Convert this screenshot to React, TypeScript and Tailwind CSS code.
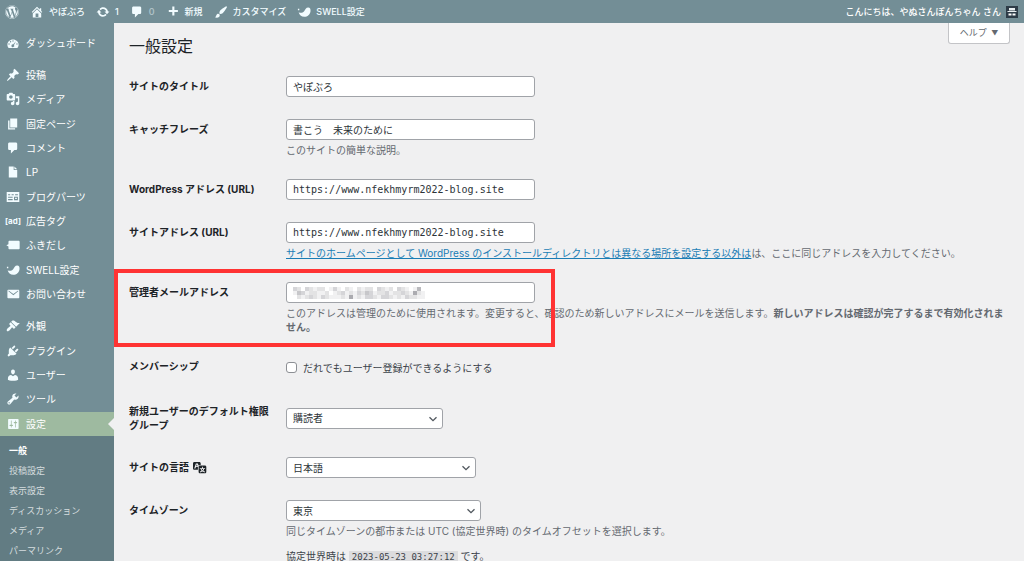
import React from 'react';
import { FaWordpress } from 'react-icons/fa6';

const ICONS = {
    home: 'M16 8.5l1.53 1.53-1.06 1.06L10 4.6l-6.47 6.49-1.06-1.06L10 2.5l4 4v-2h2v4zm-6-2.46l6 5.99V18H4v-5.97L10 6.04zM12 17v-5H8v5h4z',
    update: 'M10.2 3.28c3.53 0 6.43 2.61 6.92 6h2.08l-3.5 4-3.5-4h2.32c-.45-1.97-2.21-3.45-4.32-3.45-1.45 0-2.73.71-3.54 1.78L4.95 5.66C6.23 4.2 8.11 3.28 10.2 3.28zm-.4 13.44c-3.52 0-6.43-2.61-6.92-6H.8l3.5-4c1.17 1.33 2.33 2.67 3.5 4H5.48c.45 1.97 2.21 3.45 4.32 3.45 1.45 0 2.73-.71 3.54-1.78l1.71 1.95c-1.28 1.46-3.15 2.38-5.25 2.38z',
    comment: 'M5 2h9c1.1 0 2 .9 2 2v7c0 1.1-.9 2-2 2h-2l-5 5v-5H5c-1.1 0-2-.9-2-2V4c0-1.1.9-2 2-2z',
    plus: 'M17 7v3h-5v5H9v-5H4V7h5V2h3v5h5z',
    brush: 'M18.33 3.57s.27-.8-.31-1.36c-.53-.52-1.22-.24-1.22-.24-.61.3-5.76 3.47-7.67 5.57-.86.96-2.06 3.79-1.09 4.82.92.98 3.96-.17 4.79-1 2.06-2.06 5.21-7.17 5.5-7.79zM1.4 17.65c2.37-1.56 1.46-3.41 3.23-4.64.93-.65 2.22-.62 3.08.29.63.67.8 2.57-.16 3.46-1.57 1.45-4 1.55-6.15.89z',
    swell: 'M2.4 10.4c2.6 1.4 5.8.9 7.800-1.600C11.900 6.700 12.800 3.600 16 3.600c2.600 0 3.700 2.400 3.300 5.200-.6 4.700-4.200 8-8.800 8-4.300 0-7.400-2.700-8.100-6.400zM1.300 5.400h2v2h-2z',
    dashboard: 'M3.76 17h12.480c1.100-1.240 1.760-2.870 1.760-4.660C18 8.280 14.420 5 10 5s-8 3.280-8 7.340c0 1.790.660 3.420 1.760 4.660zM10 6a1 1 0 1 1 0 2 1 1 0 0 1 0-2zM6.500 7.300a1 1 0 1 1 0 2 1 1 0 0 1 0-2zM4.300 10.500a1 1 0 1 1 0 2 1 1 0 0 1 0-2zM15.700 10.500a1 1 0 1 1 0 2 1 1 0 0 1 0-2zM14.200 7.600l-2.800 5.200a2 2 0 1 1-1.300-.8z',
    post: 'M10.44 3.02l1.82-1.82 6.36 6.35-1.83 1.82c-1.05-.68-2.48-.57-3.41.36l-.75.75c-.92.93-1.04 2.35-.35 3.41l-1.83 1.82-2.41-2.41-2.8 2.79c-.42.42-3.38 2.71-3.8 2.29s1.86-3.39 2.28-3.81l2.79-2.79L4.1 9.36l1.83-1.82c1.05.69 2.48.57 3.4-.36l.75-.75c.93-.92 1.05-2.35.36-3.41z',
    media: 'M13 11V4c0-.55-.45-1-1-1h-1.67L9 1H5L3.67 3H2c-.55 0-1 .45-1 1v7c0 .55.45 1 1 1h10c.55 0 1-.45 1-1zM7 4.5c1.38 0 2.5 1.12 2.5 2.5S8.38 9.5 7 9.5 4.5 8.38 4.5 7 5.62 4.5 7 4.5zM14 6h5v10.5c0 1.38-1.12 2.5-2.5 2.5S14 17.88 14 16.5s1.12-2.5 2.5-2.5c.17 0 .34.02.5.05V9h-3V6zm-4 8.05V13h2v3.5c0 1.38-1.12 2.5-2.5 2.5S7 17.88 7 16.5 8.12 14 9.5 14c.17 0 .34.02.5.05z',
    page: 'M6 15V2h10v13H6zm-1 1h8v2H3V5h2v11z',
    doc: 'M4 2h7v5h5v11H4zM12 2l4 4h-4z',
    parts: 'M1 3h18v14H1zM3 6h3v1.500H3zM8 6h3v1.500H8zM13 6h4v1.500h-4zM3 9.500h6.500v1.500H3zM3 13h6.500v1.500H3zM11.500 9.500H17v5h-5.500zM13 11v2h2.500v-2z',
    balloon: 'M5 4h13c.8 0 1.500.7 1.500 1.500v9c0 .8-.7 1.500-1.500 1.500H5c-.8 0-1.500-.7-1.500-1.500V12L.5 10.500 3.500 9V5.500C3.500 4.700 4.200 4 5 4z',
    mail: 'M3.500 4h14c.8 0 1.500.7 1.500 1.500v9c0 .8-.7 1.500-1.500 1.500h-14c-.8 0-1.500-.7-1.500-1.500v-9C2 4.700 2.700 4 3.500 4zM4.200 5.300c-.6-.3-1.100.4-.6.9l6.900 5.600 6.900-5.600c.5-.5 0-1.200-.6-.9l-6.300 4.800z',
    appearance: 'M14.48 11.06L7.41 3.99l1.5-1.5c.5-.56 2.3-.47 3.51.32 1.21.8 1.43 1.28 2.91 2.1 1.18.64 2.45 1.26 4.45.85zm-.71.71L6.7 4.7 4.93 6.47c-.39.39-.39 1.02 0 1.41l1.06 1.06c.39.39.39 1.03 0 1.42-.6.6-1.43 1.11-2.21 1.69-.35.26-.7.53-1.01.84C1.43 14.23.4 16.08 1.4 17.07c.99 1 2.84-.03 4.18-1.36.31-.31.58-.66.85-1.02.57-.78 1.08-1.61 1.69-2.21.39-.39 1.02-.39 1.41 0l1.06 1.06c.39.39 1.02.39 1.41 0z',
    plugins: 'M13.11 4.36L9.87 7.6 8 5.73l3.24-3.24c.35-.34 1.05-.2 1.56.32.52.51.66 1.21.31 1.55zm-8 1.77l.91-1.12 9.01 9.01-1.19.84c-.71.71-2.63 1.16-3.82 1.16H6.14L4.9 17.26c-.59.59-1.54.59-2.12 0-.59-.58-.59-1.53 0-2.12l1.24-1.24v-3.88c0-1.13.4-3.19 1.09-3.89zm7.26 3.97l3.24-3.24c.34-.35 1.04-.21 1.55.31.52.51.66 1.21.31 1.55l-3.24 3.25z',
    users: 'M10 9.25c-2.27 0-2.73-3.44-2.73-3.44C7 4.02 7.82 2 9.97 2c2.16 0 2.98 2.02 2.71 3.81 0 0-.41 3.44-2.68 3.44zm0 2.57L12.72 10c2.39 0 4.52 2.33 4.52 4.53v2.49s-3.65 1.13-7.24 1.13c-3.65 0-7.24-1.13-7.24-1.13v-2.49c0-2.25 1.94-4.48 4.47-4.48z',
    tools: 'M16.68 9.77c-1.34 1.34-3.3 1.67-4.95.99l-5.41 6.52c-.99.99-2.59.99-3.58 0s-.99-2.59 0-3.57l6.52-5.42c-.68-1.65-.35-3.61.99-4.95 1.28-1.28 3.12-1.62 4.72-1.06l-2.89 2.89 2.82 2.82 2.86-2.87c.53 1.58.18 3.39-1.08 4.65zM3.81 16.21c.4.39 1.04.39 1.43 0 .4-.4.4-1.04 0-1.43-.39-.4-1.03-.4-1.43 0-.39.39-.39 1.03 0 1.43z',
    settings: 'M18 16V4c0-.55-.45-1-1-1H4c-.55 0-1 .45-1 1v12c0 .55.45 1 1 1h13c.55 0 1-.45 1-1zM8 11h1c.55 0 1 .45 1 1s-.45 1-1 1H8v1.5c0 .28-.22.5-.5.5s-.5-.22-.5-.5V13H6c-.55 0-1-.45-1-1s.45-1 1-1h1V5.5c0-.28.22-.5.5-.5s.5.22.5.5V11zm5-2h-1c-.55 0-1-.45-1-1s.45-1 1-1h1V5.5c0-.28.22-.5.5-.5s.5.22.5.5V7h1c.55 0 1 .45 1 1s-.45 1-1 1h-1v5.5c0 .28-.22.5-.5.5s-.5-.22-.5-.5V9z',
    translation: 'M11 7H9.49c-.63 0-1.25.3-1.59.7L7 5H4.13l-2.39 7h1.69l.74-2H7v4H2c-1.1 0-2-.9-2-2V5c0-1.1.9-2 2-2h7c1.1 0 2 .9 2 2v2zM6.51 9H4.49l1-2.93zM10 8h7c1.1 0 2 .9 2 2v7c0 1.1-.9 2-2 2h-7c-1.1 0-2-.9-2-2v-7c0-1.1.9-2 2-2zm7.25 5v-1.08h-3.17V9.75h-1.16v2.17H9.75V13h1.28c.11.85.56 1.85 1.28 2.62-.87.36-1.89.62-2.31.62-.01.02.22.97.2 1.46.84 0 2.21-.5 3.28-1.15 1.09.65 2.48 1.15 3.34 1.15-.02-.49.2-1.44.2-1.46-.43 0-1.49-.27-2.38-.63.7-.77 1.14-1.77 1.25-2.61h1.36zm-3.81 1.93c-.5-.46-.85-1.13-1.01-1.93h2.09c-.17.8-.51 1.47-1.08 1.93z',
};

type IconName = keyof typeof ICONS;

interface MenuItem {
    label: string;
    icon?: IconName;
    active?: boolean;
}

const CONTENT_MENU: MenuItem[] = [
    { label: '投稿', icon: 'post' },
    { label: 'メディア', icon: 'media' },
    { label: '固定ページ', icon: 'page' },
    { label: 'コメント', icon: 'comment' },
    { label: 'LP', icon: 'doc' },
    { label: 'ブログパーツ', icon: 'parts' },
    { label: '広告タグ' },
    { label: 'ふきだし', icon: 'balloon' },
    { label: 'SWELL設定', icon: 'swell' },
    { label: 'お問い合わせ', icon: 'mail' },
];

const ADMIN_MENU: MenuItem[] = [
    { label: '外観', icon: 'appearance' },
    { label: 'プラグイン', icon: 'plugins' },
    { label: 'ユーザー', icon: 'users' },
    { label: 'ツール', icon: 'tools' },
    { label: '設定', icon: 'settings', active: true },
];

const SUBMENU = ['一般', '投稿設定', '表示設定', 'ディスカッション', 'メディア', 'パーマリンク'];

// darkness of each block of the masked address, 0 = white
const MASK = [
    '320321220131021021220321203210150',
    '143122112012312132431223122321621',
    '021232132111216121332133212132211',
];

function Icon({ name, className = 'size-[14px]' }: { name: IconName; className?: string }) {
    return (
        <svg viewBox="0 0 20 20" className={`shrink-0 ${className}`} fill="currentColor" fillRule="evenodd" aria-hidden="true">
            <path d={ICONS[name]} />
        </svg>
    );
}

function BarLink({ icon, label, dim }: { icon: IconName; label: string; dim?: boolean }) {
    return (
        <a href="#" className="flex items-center gap-[5px] text-[#f2fcff]">
            <Icon name={icon} />
            <span className={dim ? 'opacity-50' : ''}>{label}</span>
        </a>
    );
}

function AdminBar() {
    return (
        <header className="flex h-[23px] shrink-0 items-center bg-[#738e96] pl-[5px] pr-[6px] text-[9px] leading-[14px] font-medium text-white">
            <nav className="flex items-center gap-[11px]">
                <a href="#" aria-label="WordPress" className="text-[#f2fcff]">
                    <FaWordpress className="size-[14px]" />
                </a>
                <BarLink icon="home" label="やぽぶろ" />
                <BarLink icon="update" label="1" />
                <BarLink icon="comment" label="0" dim />
                <BarLink icon="plus" label="新規" />
                <BarLink icon="brush" label="カスタマイズ" />
                <BarLink icon="swell" label="SWELL設定" />
            </nav>
            <a href="#" className="ml-auto flex items-center gap-[5px]">
                こんにちは、やぬさんぽんちゃん さん
                <svg viewBox="0 0 12 12" className="size-[12px]" aria-hidden="true">
                    <rect width="12" height="12" fill="#2d3b47" />
                    <path d="M3 2h6v2.500H3zM1.500 5h9v1h-9z" fill="#e8eef0" />
                    <path d="M2.500 7.500h3v2h-3zM6.500 7.500h3v2h-3z" fill="#fff" />
                </svg>
            </a>
        </header>
    );
}

function SideLink({ item }: { item: MenuItem }) {
    return (
        <a
            href="#"
            className={`relative flex items-center gap-[6px] pl-[6px] ${item.active ? 'bg-[#9ebaa0]' : ''}`}
        >
            {item.icon ? (
                <span className="text-[#f2fcff]"><Icon name={item.icon} /></span>
            ) : (
                <span className="flex w-[14px] shrink-0 justify-center text-[8px] font-bold text-[#f2fcff]">[ad]</span>
            )}
            <span className="whitespace-nowrap">{item.label}</span>
            {item.active && (
                <span className="absolute right-0 top-1/2 -translate-y-1/2 border-y-[6px] border-r-[6px] border-y-transparent border-r-[#f0f0f1]" />
            )}
        </a>
    );
}

function Sidebar() {
    return (
        <nav className="w-[114px] shrink-0 bg-[#738e96] pt-[8px] text-[10px] leading-[14px] text-white">
            <div className="grid h-[24px]">
                <SideLink item={{ label: 'ダッシュボード', icon: 'dashboard' }} />
            </div>
            <div className="mt-[8px] grid h-[243px] auto-rows-fr">
                {CONTENT_MENU.map((item) => <SideLink key={item.label} item={item} />)}
            </div>
            <div className="mt-[8px] grid h-[122px] auto-rows-fr">
                {ADMIN_MENU.map((item) => <SideLink key={item.label} item={item} />)}
            </div>
            <ul className="bg-[#627c83] py-[5px] text-[9px]">
                {SUBMENU.map((label, i) => (
                    <li key={label}>
                        <a
                            href="#"
                            className={`block pl-[9px] leading-[20px] ${i === 0 ? 'font-bold text-white' : 'text-[#d5dddf]'}`}
                        >
                            {label}
                        </a>
                    </li>
                ))}
            </ul>
        </nav>
    );
}

interface RowProps {
    label: React.ReactNode;
    htmlFor: string;
    marked?: boolean;
    children: React.ReactNode;
}

function Row({ label, htmlFor, marked, children }: RowProps) {
    return (
        <div className="relative flex">
            <div className="w-[157px] shrink-0 py-[14px] pr-[14px] font-bold text-[#1d2327]">
                <label htmlFor={htmlFor}>{label}</label>
            </div>
            <div className="min-w-0 flex-1 self-center py-[11px]">{children}</div>
            {marked && (
                <div className="pointer-events-none absolute -inset-y-[2px] -left-[15px] w-[441px] border-4 border-[#ff3333]" />
            )}
        </div>
    );
}

function TextBox({ id, value, mono }: { id: string; value: string; mono?: boolean }) {
    return (
        <input
            id={id}
            type="text"
            defaultValue={value}
            className={`block h-[21px] w-[249px] rounded-[3px] border border-[#a0a3a8] bg-white px-[6px] text-[#2c3338] ${mono ? "font-['DejaVu_Sans_Mono',monospace]" : ''}`}
        />
    );
}

function SelectBox({ id, value, width }: { id: string; value: string; width: string }) {
    return (
        <div className={`relative ${width}`}>
            <select
                id={id}
                className="block h-[21px] w-full appearance-none rounded-[3px] border border-[#a0a3a8] bg-white pl-[6px] pr-[18px] text-[#2c3338]"
            >
                <option>{value}</option>
            </select>
            <svg viewBox="0 0 10 10" className="pointer-events-none absolute right-[5px] top-[6px] size-[10px]" aria-hidden="true">
                <path d="M1.500 3.200L5 6.700l3.500-3.500" fill="none" stroke="#50575e" strokeWidth="1.300" />
            </svg>
        </div>
    );
}

function Note({ children }: { children: React.ReactNode }) {
    return <p className="mt-[3px] text-[#646970]">{children}</p>;
}

function MaskedAddress() {
    return (
        <svg viewBox="0 0 132 12" className="pointer-events-none absolute left-[7px] top-[5px] h-[12px] w-[132px]" aria-hidden="true">
            {MASK.map((line, y) =>
                line.split('').map((d, x) => (
                    <rect key={`${x}-${y}`} x={x * 4} y={y * 4} width="4" height="4" fill="#50505a" opacity={Number(d) * 0.08} />
                ))
            )}
        </svg>
    );
}

export default function App() {
    return (
        <div className="flex h-screen flex-col overflow-hidden bg-[#f0f0f1] font-['Inter','Noto_Sans_CJK_JP',sans-serif] text-[10px] leading-[14px] text-[#3c434a]">
            <AdminBar />
            <div className="flex min-h-0 flex-1">
                <Sidebar />
                <main className="min-w-0 flex-1 pl-[15px] pr-[14px]">
                    <div className="flex items-start justify-between">
                        <h1 className="pt-[12px] text-[16px] leading-[22px] text-[#1d2327]">一般設定</h1>
                        <button
                            type="button"
                            className="h-[21px] w-[62px] rounded-b-[3px] border border-t-0 border-[#c3c4c7] bg-white text-[9px] text-[#646970]"
                        >
                            ヘルプ <span className="ml-[2px] text-[7px]">▼</span>
                        </button>
                    </div>
                    <form className="mt-[8px]">
                        <Row label="サイトのタイトル" htmlFor="title">
                            <TextBox id="title" value="やぽぶろ" />
                        </Row>
                        <Row label="キャッチフレーズ" htmlFor="tagline">
                            <TextBox id="tagline" value="書こう　未来のために" />
                            <Note>このサイトの簡単な説明。</Note>
                        </Row>
                        <Row label="WordPress アドレス (URL)" htmlFor="siteurl">
                            <TextBox id="siteurl" value="https://www.nfekhmyrm2022-blog.site" mono />
                        </Row>
                        <Row label="サイトアドレス (URL)" htmlFor="home">
                            <TextBox id="home" value="https://www.nfekhmyrm2022-blog.site" mono />
                            <Note>
                                <a href="#" className="text-[#1a7db5] underline">
                                    サイトのホームページとして WordPress のインストールディレクトリとは異なる場所を設定する以外は
                                </a>
                                は、ここに同じアドレスを入力してください。
                            </Note>
                        </Row>
                        <Row label="管理者メールアドレス" htmlFor="email" marked>
                            <div className="relative">
                                <TextBox id="email" value="" />
                                <MaskedAddress />
                            </div>
                            <Note>
                                このアドレスは管理のために使用されます。変更すると、確認のため新しいアドレスにメールを送信します。<strong>新しいアドレスは確認が完了するまで有効化されません。</strong>
                            </Note>
                        </Row>
                        <Row label="メンバーシップ" htmlFor="register">
                            <label className="flex h-[23px] items-center gap-[6px]">
                                <input
                                    id="register"
                                    type="checkbox"
                                    className="size-[11px] appearance-none rounded-[3px] border border-[#8c8f94] bg-white"
                                />
                                だれでもユーザー登録ができるようにする
                            </label>
                        </Row>
                        <Row label="新規ユーザーのデフォルト権限グループ" htmlFor="role">
                            <SelectBox id="role" value="購読者" width="w-[157px]" />
                        </Row>
                        <Row
                            label={
                                <span className="flex items-center gap-[4px]">
                                    サイトの言語 <Icon name="translation" />
                                </span>
                            }
                            htmlFor="lang"
                        >
                            <SelectBox id="lang" value="日本語" width="w-[190px]" />
                        </Row>
                        <Row label="タイムゾーン" htmlFor="timezone">
                            <SelectBox id="timezone" value="東京" width="w-[195px]" />
                            <Note>同じタイムゾーンの都市または UTC (協定世界時) のタイムオフセットを選択します。</Note>
                            <p className="mt-[11px] whitespace-nowrap">
                                協定世界時は{' '}
                                <code className="bg-[#dcdcde] px-[3px] py-px text-[9px] font-['DejaVu_Sans_Mono',monospace]">2023-05-23 03:27:12</code>{' '}
                                です。
                            </p>
                        </Row>
                    </form>
                </main>
            </div>
        </div>
    );
}
